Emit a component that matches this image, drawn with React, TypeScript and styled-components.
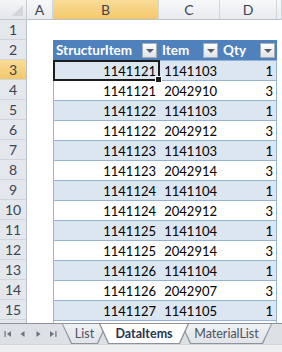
import styled, { createGlobalStyle } from "styled-components";

const GlobalStyle = createGlobalStyle`
  html, body {
    margin: 0;
    padding: 0;
    width: 282px;
    height: 352px;
    overflow: hidden;
    background: #ffffff;
  }
  body {
    font-family: Lato, "Noto Sans", "Liberation Sans", sans-serif;
  }
`;

const rows: [string, string, string][] = [
  ["1141121", "1141103", "1"],
  ["1141121", "2042910", "3"],
  ["1141122", "1141103", "1"],
  ["1141122", "2042912", "3"],
  ["1141123", "1141103", "1"],
  ["1141123", "2042914", "3"],
  ["1141124", "1141104", "1"],
  ["1141124", "2042912", "3"],
  ["1141125", "1141104", "1"],
  ["1141125", "2042914", "3"],
  ["1141126", "1141104", "1"],
  ["1141126", "2042907", "3"],
  ["1141127", "1141105", "1"],
  ["1141127", "2042916", "3"],
];

const tabs = [
  { name: "List", width: 45, active: false },
  { name: "DataItems", width: 90, active: true },
  { name: "MaterialList", width: 91, active: false },
];

export default function App() {
  return (
    <>
      <GlobalStyle />
      <Window>
        <Sheet>
          <Corner>
            <CornerMark />
          </Corner>
          <ColHead>A</ColHead>
          <ColHead $active>B</ColHead>
          <ColHead>C</ColHead>
          <ColHead>D</ColHead>
          <ColHead />

          <RowHead>1</RowHead>
          <Blank />
          <Blank />
          <Blank />
          <Blank />
          <Blank />

          <RowHead>2</RowHead>
          <Blank />
          <TableHead>
            <span>StructurItem</span>
            <FilterButton />
          </TableHead>
          <TableHead>
            <span>Item</span>
            <FilterButton />
          </TableHead>
          <TableHead>
            <span>Qty</span>
            <FilterButton />
          </TableHead>
          <Blank />

          {rows.map((r, i) => {
            const band = i % 2 === 0;
            return [
              <RowHead key={`h${i}`} $active={i === 0}>
                {i + 3}
              </RowHead>,
              <Blank key={`a${i}`} />,
              <DataCell key={`b${i}`} $band={band} $first>
                {r[0]}
                {i === 0 && (
                  <Selection>
                    <FillHandle />
                  </Selection>
                )}
              </DataCell>,
              <DataCell key={`c${i}`} $band={band}>
                {r[1]}
              </DataCell>,
              <DataCell key={`d${i}`} $band={band} $last>
                {r[2]}
              </DataCell>,
              <Blank key={`e${i}`} />,
            ];
          })}
        </Sheet>

        <TabBar>
          <NavGroup>
            <NavIcon viewBox="0 0 10 10">
              <rect x="1.5" y="2" width="1.2" height="6" fill="#6b7480" />
              <path d="M8 2 L4 5 L8 8 Z" fill="#6b7480" />
            </NavIcon>
            <NavIcon viewBox="0 0 10 10">
              <path d="M6.5 2 L2.5 5 L6.5 8 Z" fill="#6b7480" />
            </NavIcon>
            <NavIcon viewBox="0 0 10 10">
              <path d="M3.5 2 L7.5 5 L3.5 8 Z" fill="#6b7480" />
            </NavIcon>
            <NavIcon viewBox="0 0 10 10">
              <path d="M2 2 L6 5 L2 8 Z" fill="#6b7480" />
              <rect x="7.3" y="2" width="1.2" height="6" fill="#6b7480" />
            </NavIcon>
          </NavGroup>
          <Tabs>
            {tabs.map((t) => (
              <Tab key={t.name} $active={t.active} $w={t.width}>
                {t.name}
              </Tab>
            ))}
          </Tabs>
        </TabBar>
        <StatusStrip />
      </Window>
    </>
  );
}

const Window = styled.div`
  width: 282px;
  height: 352px;
  display: flex;
  flex-direction: column;
  overflow: hidden;
`;

const Sheet = styled.div`
  display: grid;
  grid-template-columns: 27px 26px 106px 61px 57px 5px;
  grid-auto-rows: 20px;
  height: 323px;
  flex-shrink: 0;
  overflow: hidden;
  font-size: 13px;
  color: #000000;
`;

const Corner = styled.div`
  position: relative;
  background: linear-gradient(#f4f5f7, #e3e6ea);
  border-right: 1px solid #c5cad1;
  border-bottom: 1px solid #c5cad1;
  box-sizing: border-box;
`;

const CornerMark = styled.div`
  position: absolute;
  right: 3px;
  bottom: 3px;
  width: 0;
  height: 0;
  border-left: 11px solid transparent;
  border-bottom: 11px solid #d2d6dc;
`;

const ColHead = styled.div<{ $active?: boolean }>`
  display: flex;
  align-items: center;
  justify-content: center;
  box-sizing: border-box;
  border-right: 1px solid #d0d5dc;
  border-bottom: 1px solid #b9c1cc;
  background: ${(p) =>
    p.$active
      ? "linear-gradient(#f9dc98, #f3c868)"
      : "linear-gradient(#f7f8fa, #e9ebef)"};
  color: #3b4452;
  font-size: 14px;
`;

const RowHead = styled.div<{ $active?: boolean }>`
  display: flex;
  align-items: center;
  justify-content: center;
  box-sizing: border-box;
  border-right: 1px solid #b9c1cc;
  border-bottom: 1px solid #d0d5dc;
  background: ${(p) =>
    p.$active ? "linear-gradient(#f9dc98, #f3c868)" : "#e4e7ec"};
  color: #3b4452;
  font-size: 14px;
`;

const Blank = styled.div`
  background: #ffffff;
`;

const TableHead = styled.div`
  display: flex;
  align-items: center;
  justify-content: space-between;
  padding: 0 2px 0 3px;
  box-sizing: border-box;
  background: #4f81bd;
  color: #ffffff;
  font-weight: 700;
  font-size: 13.5px;
`;

const FilterButton = styled.div`
  position: relative;
  width: 15px;
  height: 15px;
  box-sizing: border-box;
  border: 1px solid #a7adb5;
  background: linear-gradient(#ffffff, #dfe2e6);

  &::after {
    content: "";
    position: absolute;
    left: 3px;
    top: 5px;
    border-left: 4px solid transparent;
    border-right: 4px solid transparent;
    border-top: 4px solid #555c66;
  }
`;

const DataCell = styled.div<{
  $band: boolean;
  $first?: boolean;
  $last?: boolean;
}>`
  position: relative;
  display: flex;
  align-items: center;
  justify-content: flex-end;
  padding: 1px 3px 0 3px;
  box-sizing: border-box;
  background: ${(p) => (p.$band ? "#dce6f1" : "#ffffff")};
  border-top: 1px solid #95b3d7;
  border-left: ${(p) => (p.$first ? "1px solid #95b3d7" : "none")};
  border-right: ${(p) => (p.$last ? "1px solid #95b3d7" : "none")};
`;

const Selection = styled.div`
  position: absolute;
  left: -1px;
  top: -1px;
  right: -1px;
  bottom: -1px;
  border: 2px solid #1c1c1c;
  z-index: 2;
  pointer-events: none;
`;

const FillHandle = styled.div`
  position: absolute;
  right: -4px;
  bottom: -4px;
  width: 5px;
  height: 5px;
  background: #1c1c1c;
  border: 1px solid #ffffff;
`;

const TabBar = styled.div`
  display: flex;
  align-items: flex-start;
  height: 21px;
  flex-shrink: 0;
  box-sizing: border-box;
  border-top: 1px solid #8d949e;
  background: #dde1e6;
`;

const NavGroup = styled.div`
  display: flex;
  align-items: center;
  gap: 5px;
  width: 62px;
  height: 20px;
  padding-left: 3px;
  box-sizing: border-box;
`;

const NavIcon = styled.svg`
  width: 10px;
  height: 10px;
`;

const Tabs = styled.div`
  display: flex;
  align-items: flex-start;
`;

const Tab = styled.div<{ $active?: boolean; $w: number }>`
  position: relative;
  z-index: ${(p) => (p.$active ? 2 : 1)};
  display: flex;
  align-items: center;
  justify-content: center;
  width: ${(p) => p.$w}px;
  height: 19px;
  margin-left: -8px;
  padding-bottom: 1px;
  font-size: 12.5px;
  font-weight: ${(p) => (p.$active ? 700 : 400)};
  color: ${(p) => (p.$active ? "#26364d" : "#4b525c")};
  background: #8d949e;
  clip-path: polygon(0 0, 100% 0, calc(100% - 9px) 100%, 9px 100%);

  &:first-child {
    margin-left: 0;
  }

  &::before {
    content: "";
    position: absolute;
    left: 1px;
    right: 1px;
    top: ${(p) => (p.$active ? "-1px" : "0")};
    bottom: 1px;
    z-index: -1;
    background: ${(p) =>
      p.$active ? "#ffffff" : "linear-gradient(#eef0f3, #e1e4e8)"};
    clip-path: polygon(0 0, 100% 0, calc(100% - 9px) 100%, 9px 100%);
  }
`;

const StatusStrip = styled.div`
  flex: 1;
  background: #eeeff1;
  border-top: 1px solid #d3d6da;
`;
